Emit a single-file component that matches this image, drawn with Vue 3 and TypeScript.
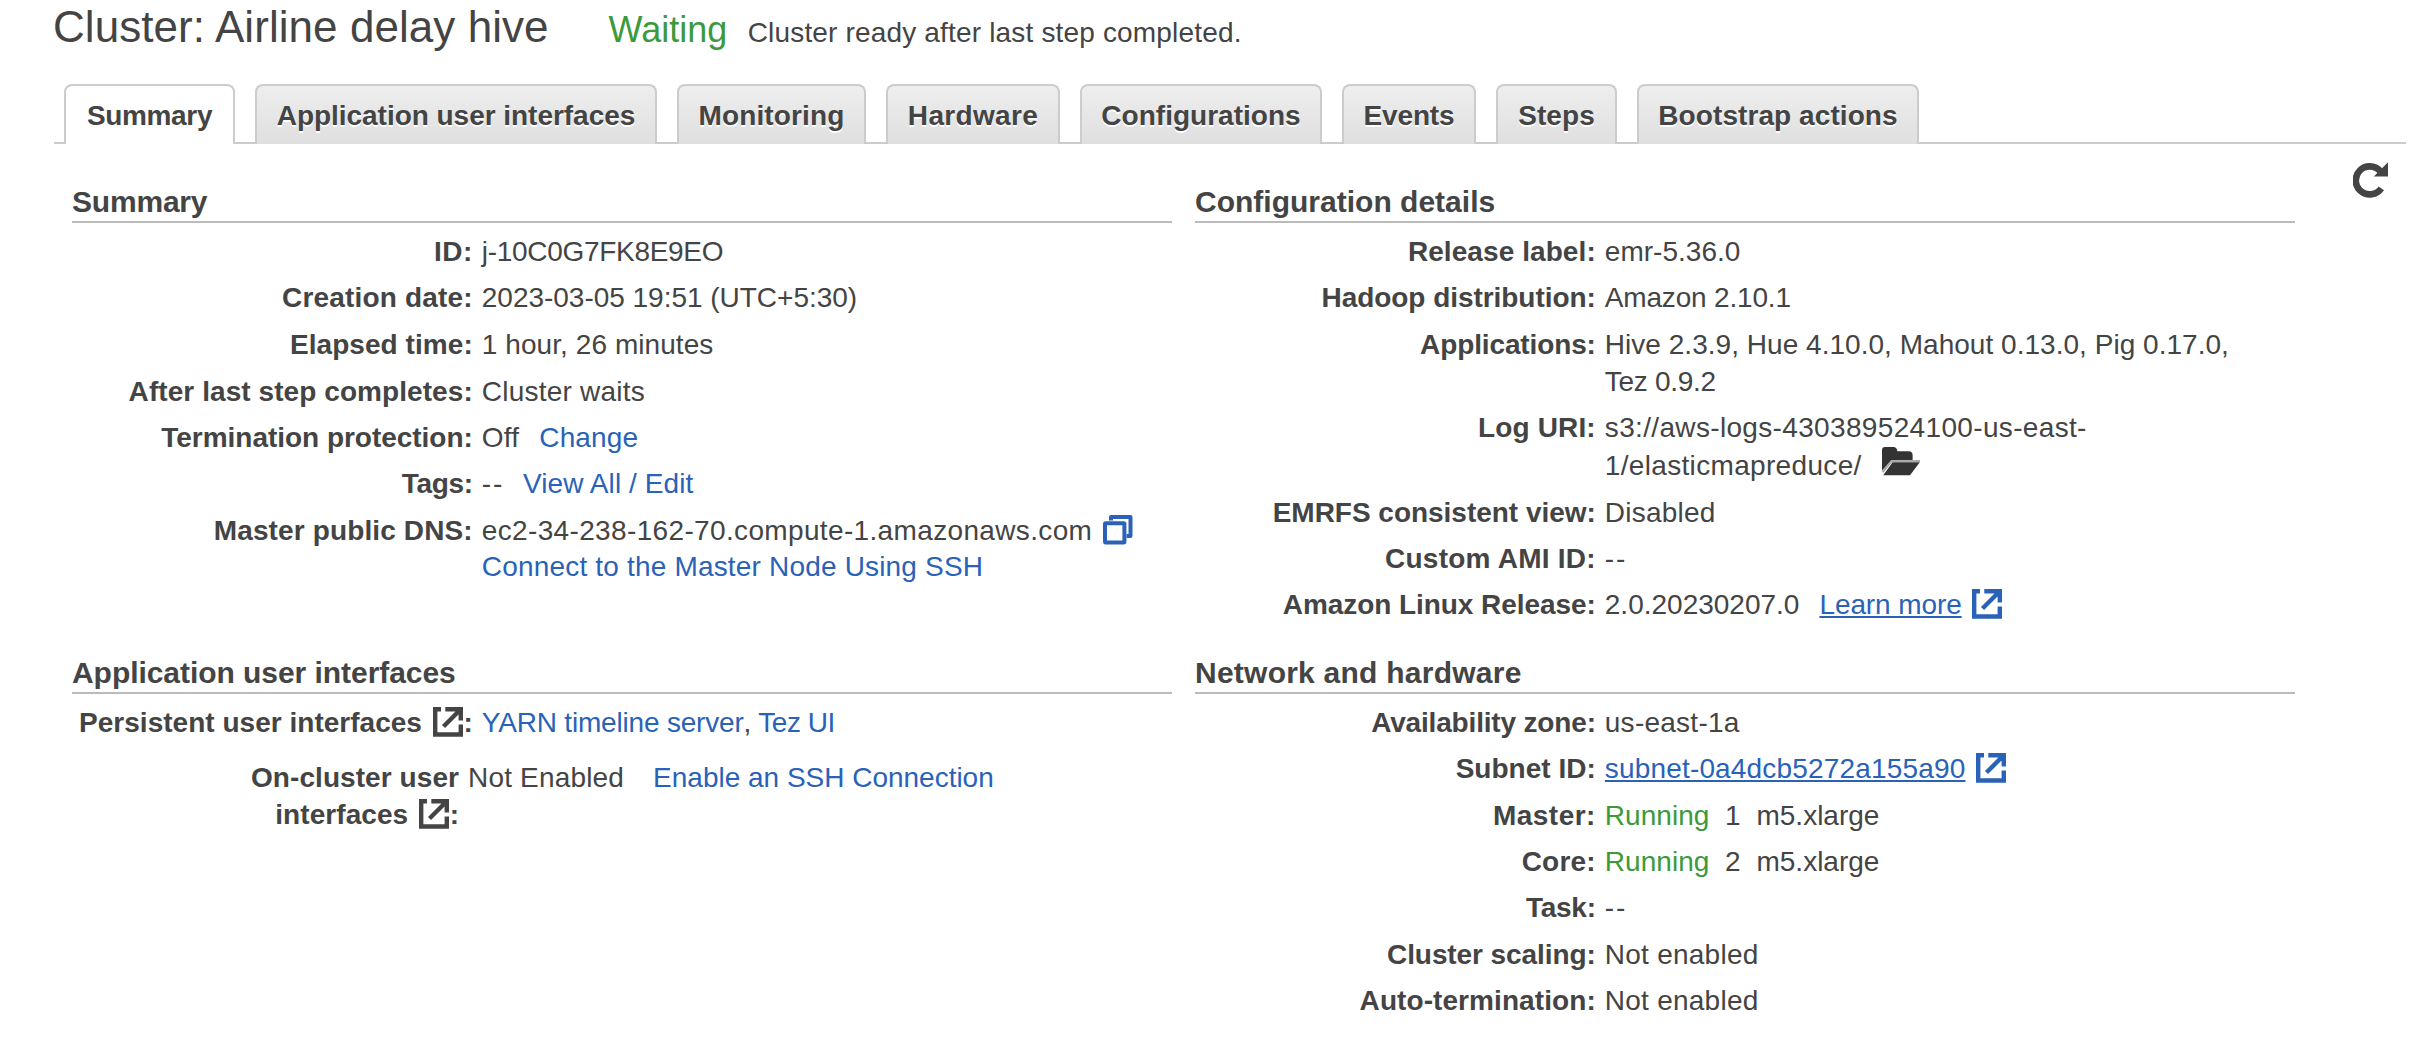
<script setup lang="ts">
interface Part {
  text?: string
  ls?: number
  gap?: number
  kind?: 'link' | 'under' | 'ok'
  icon?: 'copy' | 'external' | 'folder'
}
interface Line { height: number; parts: Part[] }
interface Row { label: Line[]; value: Line[]; narrow?: boolean }
interface Section { title: string; ls: number; rows: Row[] }

const tabs = [
  { name: 'Summary', width: 171, ls: -0.34 },
  { name: 'Application user interfaces', width: 402, ls: -0.033 },
  { name: 'Monitoring', width: 189, ls: 0.12 },
  { name: 'Hardware', width: 174, ls: 0.337 },
  { name: 'Configurations', width: 242, ls: 0.014 },
  { name: 'Events', width: 134, ls: -0.17 },
  { name: 'Steps', width: 121, ls: 0.08 },
  { name: 'Bootstrap actions', width: 282, ls: 0.078 },
]

const line = (height: number, ...parts: Part[]): Line => ({ height, parts })
const row = (label: string, ls: number, ...value: Line[]): Row => ({
  label: [line(36, { text: label, ls })],
  value,
})

const sections: Section[] = [
  {
    title: 'Summary', ls: -0.2,
    rows: [
      row('ID:', 0.5, line(46, { text: 'j-10C0G7FK8E9EO', ls: -0.3 })),
      row('Creation date:', 0.18, line(47, { text: '2023-03-05 19:51 (UTC+5:30)', ls: -0.022 })),
      row('Elapsed time:', 0.056, line(47, { text: '1 hour, 26 minutes', ls: 0.07 })),
      row('After last step completes:', 0.072, line(46, { text: 'Cluster waits', ls: 0.22 })),
      row('Termination protection:', -0.028, line(46, { text: 'Off', ls: 0.224 }, { text: 'Change', ls: 0.12, gap: 20, kind: 'link' })),
      row('Tags:', -0.3, line(47, { text: '--', ls: 1.8 }, { text: 'View All / Edit', ls: 0.08, gap: 19, kind: 'link' })),
      row('Master public DNS:', 0.13,
        line(36, { text: 'ec2-34-238-162-70.compute-1.amazonaws.com', ls: 0.35 }, { icon: 'copy', gap: 10.5, kind: 'link' }),
        line(36, { text: 'Connect to the Master Node Using SSH', ls: 0.18, kind: 'link' })),
    ],
  },
  {
    title: 'Configuration details', ls: 0.009,
    rows: [
      row('Release label:', 0.08, line(46, { text: 'emr-5.36.0', ls: 0.02 })),
      row('Hadoop distribution:', -0.05, line(47, { text: 'Amazon 2.10.1', ls: -0.18 })),
      row('Applications:', -0.126,
        line(37, { text: 'Hive 2.3.9, Hue 4.10.0, Mahout 0.13.0, Pig 0.17.0,', ls: 0.03 }),
        line(46, { text: 'Tez 0.9.2', ls: -0.3 })),
      row('Log URI:', 0.141,
        line(38, { text: 's3://aws-logs-430389524100-us-east-', ls: 0.34 }),
        line(47, { text: '1/elasticmapreduce/', ls: 0.33 }, { icon: 'folder', gap: 19 })),
      row('EMRFS consistent view:', -0.023, line(46, { text: 'Disabled', ls: 0.22 })),
      row('Custom AMI ID:', 0.24, line(46, { text: '--', ls: 1.8 })),
      row('Amazon Linux Release:', -0.059,
        line(36, { text: '2.0.20230207.0', ls: 0 }, { text: 'Learn more', ls: -0.1, gap: 20, kind: 'under' }, { icon: 'external', gap: 10, kind: 'link' })),
    ],
  },
  {
    title: 'Application user interfaces', ls: -0.05,
    rows: [
      {
        label: [line(36, { text: 'Persistent user interfaces', ls: 0.02 }, { icon: 'external', gap: 11 }, { text: ':', gap: 0.5 })],
        value: [line(55, { text: 'YARN timeline server', ls: -0.191, kind: 'link' }, { text: ',' }, { text: 'Tez UI', ls: -0.5, gap: 7, kind: 'link' })],
      },
      {
        narrow: true,
        label: [
          line(37, { text: 'On-cluster user', ls: 0.068 }),
          line(36, { text: 'interfaces', ls: 0.06 }, { icon: 'external', gap: 11 }, { text: ':', gap: 0.5 }),
        ],
        value: [line(36, { text: 'Not Enabled', ls: 0.18 }, { text: 'Enable an SSH Connection', ls: -0.01, gap: 29, kind: 'link' })],
      },
    ],
  },
  {
    title: 'Network and hardware', ls: 0.24,
    rows: [
      row('Availability zone:', -0.168, line(46, { text: 'us-east-1a', ls: 0.254 })),
      row('Subnet ID:', 0.015, line(47, { text: 'subnet-0a4dcb5272a155a90', ls: 0.17, kind: 'under' }, { icon: 'external', gap: 11, kind: 'link' })),
      row('Master:', 0.45, line(46, { text: 'Running', ls: 0.04, kind: 'ok' }, { text: '1', gap: 15.5 }, { text: 'm5.xlarge', gap: 16 })),
      row('Core:', 0.2, line(46, { text: 'Running', ls: 0.04, kind: 'ok' }, { text: '2', gap: 15.5 }, { text: 'm5.xlarge', gap: 16 })),
      row('Task:', -0.236, line(47, { text: '--', ls: 1.8 })),
      row('Cluster scaling:', -0.08, line(46, { text: 'Not enabled', ls: 0.25 })),
      row('Auto-termination:', 0.08, line(36, { text: 'Not enabled', ls: 0.25 })),
    ],
  },
]
</script>

<template>
  <main class="page">
    <svg class="sprite" width="0" height="0" aria-hidden="true">
      <symbol id="external" viewBox="0 0 30 30">
        <path d="M8 2.2H2.2V27.5H27.8V17.5M12.3 2.2H27.8V13.5M10.5 19.5L27 3" fill="none" stroke="currentColor" stroke-width="4.4" />
      </symbol>
      <symbol id="copy" viewBox="0 0 30 30">
        <path d="M8 5.5V2H27.5V21H23.5" fill="none" stroke="currentColor" stroke-width="4" stroke-linejoin="round" />
        <rect x="2" y="8.2" width="19.4" height="19.2" rx="0.6" fill="#fff" stroke="currentColor" stroke-width="4" />
      </symbol>
    </svg>

    <header class="head">
      <h1 class="title">Cluster: Airline delay hive</h1>
      <span class="state">Waiting</span>
      <span class="note">Cluster ready after last step completed.</span>
    </header>

    <nav class="tabs">
      <a v-for="(tab, i) in tabs" :key="tab.name" class="tab" :class="{ active: i === 0 }"
        :style="{ width: tab.width + 'px', letterSpacing: tab.ls + 'px' }">{{ tab.name }}</a>
    </nav>

    <div class="body">
      <div class="grid">
        <section v-for="section in sections" :key="section.title">
          <h2 :style="{ letterSpacing: section.ls + 'px' }">{{ section.title }}</h2>
          <div v-for="(r, i) in section.rows" :key="i" class="row" :class="{ narrow: r.narrow }">
            <div v-for="side in (['label', 'value'] as const)" :key="side" :class="side">
              <div v-for="(l, j) in r[side]" :key="j" class="line" :style="{ height: l.height + 'px' }">
                <template v-for="(p, k) in l.parts" :key="k">
                  <svg v-if="p.icon === 'folder'" class="folder" width="40" height="30" viewBox="0 0 40 30"
                    :style="{ marginLeft: p.gap + 'px' }">
                    <path d="M1 24.5V4Q1 1 4 1H12.5Q15.6 1 16.4 5.2H28Q31.2 5.4 31.6 8.5V14H11Z" fill="#333" />
                    <path d="M1.6 26L10.6 15H39" fill="none" stroke="#aaa" stroke-width="2.2" />
                    <path d="M11.6 16.2H38.8L29 29.2H2.2Z" fill="#333" />
                  </svg>
                  <svg v-else-if="p.icon" class="icon" :class="p.kind" width="30" height="30"
                    :style="{ marginLeft: p.gap + 'px' }"><use :href="'#' + p.icon" /></svg>
                  <span v-else :class="p.kind"
                    :style="{ letterSpacing: (p.ls ?? 0) + 'px', marginLeft: (p.gap ?? 0) + 'px' }">{{ p.text }}</span>
                </template>
              </div>
            </div>
          </div>
        </section>
      </div>
      <svg class="refresh" width="36" height="38" viewBox="0 0 36 38">
        <path d="M27.2 10A14 14 0 1 0 28.3 27.3" fill="none" stroke="#444" stroke-width="6.6" />
        <path d="M35 1.3V15.4H20.8Z" fill="#444" />
      </svg>
    </div>
  </main>
</template>

<style>
body { margin: 0; background: #fff; }
</style>
<style scoped>
.page {
  width: 2418px;
  height: 1052px;
  overflow: hidden;
  box-sizing: border-box;
  padding-left: 53px;
  color: #444;
  font: 28px/36px "Liberation Sans", Arial, sans-serif;
  white-space: pre;
}
.sprite { position: absolute; }
.head { display: flex; align-items: baseline; height: 84px; padding-top: 2px; box-sizing: border-box; }
.title { width: 555.5px; margin: 0; font-size: 44px; line-height: 50px; font-weight: 400; letter-spacing: 0.06px; }
.state { width: 139.2px; font-size: 36px; color: #3c9a3c; }
.note { letter-spacing: 0.17px; }
.tabs {
  display: flex;
  gap: 20px;
  width: 2352px;
  height: 60px;
  margin-left: 1px;
  padding-left: 10px;
  box-sizing: border-box;
  background: linear-gradient(#ccc, #ccc) bottom / 100% 2px no-repeat;
}
.tab {
  box-sizing: border-box;
  height: 60px;
  padding-top: 12px;
  border: 2px solid #ccc;
  border-bottom: 0;
  border-radius: 8px 8px 0 0;
  background: linear-gradient(#eee, #dfdfdf);
  text-align: center;
  font-weight: 700;
  text-shadow: 0 2px 0 #fff;
}
.tab.active { background: #fff; }
.body { display: flex; padding-left: 19px; }
.grid {
  display: grid;
  grid-template-columns: 1100px 1100px;
  grid-template-rows: 471px auto;
  column-gap: 23px;
  padding-top: 39px;
}
h2 {
  height: 38px;
  margin: 0 0 11px;
  border-bottom: 2px solid #bbb;
  font-size: 30px;
  line-height: 38px;
}
.row { display: flex; gap: 9px; }
.label { width: 400.8px; font-weight: 700; }
.narrow .label { width: 387px; }
.label .line { justify-content: flex-end; }
.line { display: flex; align-items: flex-start; }
.icon { margin-top: 2px; flex: none; }
.folder { margin-top: -2px; flex: none; }
.link, .under { color: #2a62b8; }
.under { text-decoration: underline; text-decoration-thickness: 2px; text-underline-offset: 2px; }
.ok { color: #3c9a3c; }
.refresh { margin: 17px 0 0 58px; flex: none; }
</style>
